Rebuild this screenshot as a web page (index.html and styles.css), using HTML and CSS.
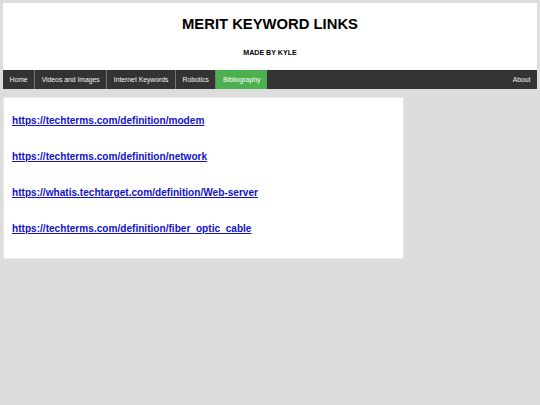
FILE: index.html
```html
<!DOCTYPE html>
<html>
<head>
<meta charset="utf-8">
<link rel="stylesheet" href="styles.css">
</head>
<body>
<div class="header">
  <h1 class="title">MERIT KEYWORD LINKS</h1>
  <p class="byline">MADE BY KYLE</p>
</div>
<div class="topnav">
  <a href="#" class="nav-item">Home</a>
  <a href="#" class="nav-item">Videos and Images</a>
  <a href="#" class="nav-item">Internet Keywords</a>
  <a href="#" class="nav-item">Robotics</a>
  <a href="#" class="nav-item active">Bibliography</a>
  <a href="#" class="nav-item right">About</a>
</div>
<div class="row">
  <div class="leftcolumn">
    <div class="card">
      <a class="link" href="#">https://techterms.com/definition/modem</a>
      <a class="link" href="#">https://techterms.com/definition/network</a>
      <a class="link" href="#">https://whatis.techtarget.com/definition/Web-server</a>
      <a class="link" href="#">https://techterms.com/definition/fiber_optic_cable</a>
    </div>
  </div>
</div>
</body>
</html>
```
FILE: styles.css
```css
html, body {
  margin: 0;
  padding: 0;
}
body {
  background: #dddddd;
  font-family: "Liberation Sans", Arial, sans-serif;
  padding: 3px;
}
.header {
  background: #ffffff;
  text-align: center;
  height: 67px;
  box-sizing: border-box;
  padding-top: 12px;
}
.title {
  margin: 0;
  font-size: 14.8px;
  line-height: 18px;
  font-weight: bold;
  color: #000;
}
.byline {
  margin: 0;
  margin-top: 15px;
  font-size: 7.1px;
  line-height: 10px;
  font-weight: bold;
  color: #000;
}
.topnav {
  display: flex;
  background: #333333;
  height: 19px;
}
.nav-item {
  display: flex;
  align-items: center;
  padding: 0 6.5px;
  color: #f2f2f2;
  text-decoration: none;
  font-size: 6.8px;
  border-right: 1px solid #777;
}
.nav-item.active {
  background: #4caf50;
  color: #fff;
  border-right: none;
}
.nav-item.right {
  margin-left: auto;
  border-right: none;
}
.row {
  display: flex;
  margin-top: 8px;
}
.leftcolumn {
  width: 401px;
}
.card {
  background: #fff;
  border: 1px solid #e8e8e8;
  box-sizing: border-box;
  height: 162px;
  padding: 16px 8px 0;
  display: flex;
  flex-direction: column;
  align-items: flex-start;
  gap: 22px;
}
.link {
  color: #1212c8;
  font-weight: bold;
  font-size: 10.1px;
  line-height: 14px;
  text-decoration: underline;
}
```
